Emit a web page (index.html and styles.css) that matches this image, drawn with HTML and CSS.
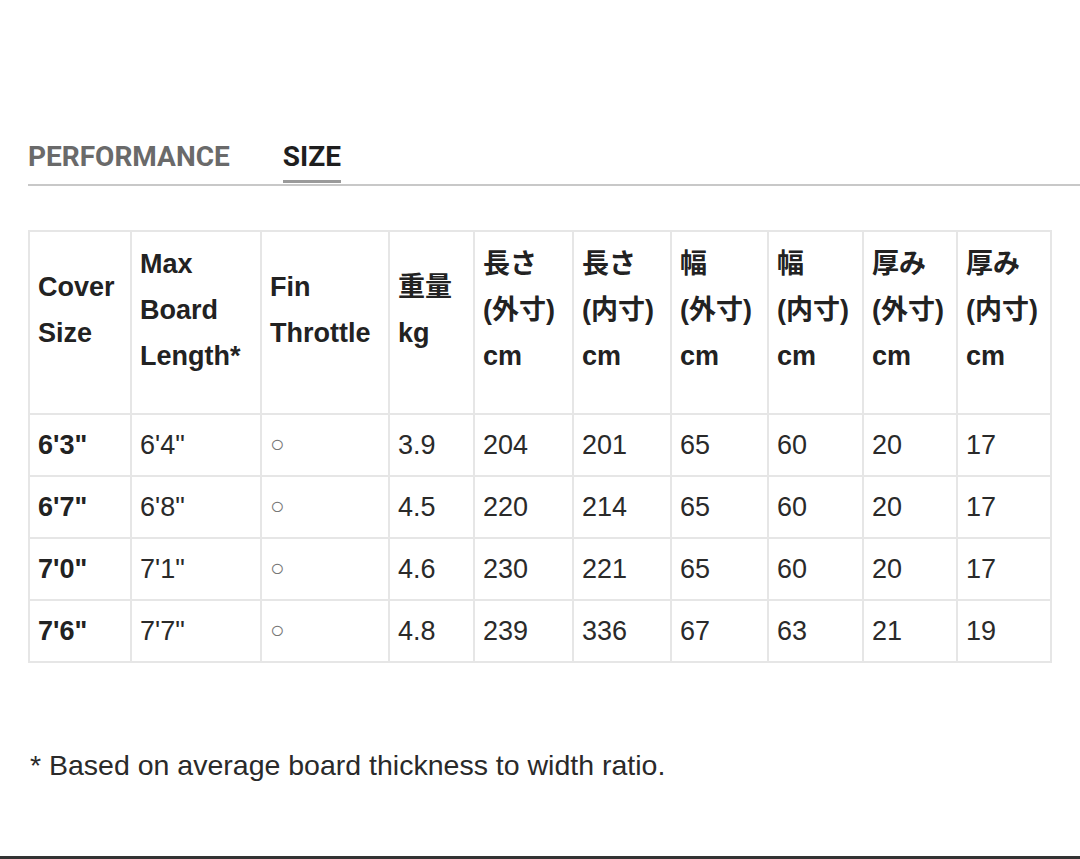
FILE: index.html
```html
<!DOCTYPE html>
<html>
<head>
<meta charset="utf-8">
<link rel="stylesheet" href="styles.css">
</head>
<body>
<div class="page">
  <div class="tabs">
    <span class="tab">PERFORMANCE</span>
    <span class="tab active">SIZE</span>
  </div>
  <table class="size-table">
    <colgroup>
      <col style="width:102px"><col style="width:130px"><col style="width:128px"><col style="width:85px"><col style="width:99px"><col style="width:98px"><col style="width:97px"><col style="width:95px"><col style="width:94px"><col style="width:94px">
    </colgroup>
    <thead>
      <tr>
        <th>Cover<br>Size</th>
        <th>Max<br>Board<br>Length*</th>
        <th>Fin<br>Throttle</th>
        <th>重量<br>kg</th>
        <th>長さ<br>(外寸)<br>cm</th>
        <th>長さ<br>(内寸)<br>cm</th>
        <th>幅<br>(外寸)<br>cm</th>
        <th>幅<br>(内寸)<br>cm</th>
        <th>厚み<br>(外寸)<br>cm</th>
        <th>厚み<br>(内寸)<br>cm</th>
      </tr>
    </thead>
    <tbody>
      <tr><td class="b">6'3"</td><td>6'4"</td><td class="o">○</td><td>3.9</td><td>204</td><td>201</td><td>65</td><td>60</td><td>20</td><td>17</td></tr>
      <tr><td class="b">6'7"</td><td>6'8"</td><td class="o">○</td><td>4.5</td><td>220</td><td>214</td><td>65</td><td>60</td><td>20</td><td>17</td></tr>
      <tr><td class="b">7'0"</td><td>7'1"</td><td class="o">○</td><td>4.6</td><td>230</td><td>221</td><td>65</td><td>60</td><td>20</td><td>17</td></tr>
      <tr><td class="b">7'6"</td><td>7'7"</td><td class="o">○</td><td>4.8</td><td>239</td><td>336</td><td>67</td><td>63</td><td>21</td><td>19</td></tr>
    </tbody>
  </table>
  <p class="note">* Based on average board thickness to width ratio.</p>
</div>
<div class="bottom-bar"></div>
</body>
</html>
```

FILE: styles.css
```css
html, body {
  margin: 0;
  padding: 0;
  background: #fff;
}
body {
  width: 1080px;
  height: 859px;
  position: relative;
  overflow: hidden;
  font-family: "Liberation Sans", Arial, "Noto Sans CJK JP", sans-serif;
  color: #222;
}
.page {
  padding: 137px 0 0 28px;
}
.tabs {
  display: flex;
  gap: 53px;
  border-bottom: 2px solid #c8c8c8;
  height: 49px;
  box-sizing: border-box;
}
.tab {
  font-family: Roboto, "Liberation Sans", sans-serif;
  font-weight: 700;
  font-size: 28px;
  line-height: 40px;
  color: #6a6a6a;
}
.tab.active {
  color: #1e1e1e;
  border-bottom: 3px solid #9a9a9a;
  height: 46px;
  box-sizing: border-box;
  margin-bottom: -2px;
}
.size-table {
  margin-top: 44px;
  border-collapse: collapse;
  table-layout: fixed;
  width: 1022px;
}
.size-table th,
.size-table td {
  border: 2px solid #e6e6e6;
  font-size: 27px;
  text-align: left;
  padding: 0 0 0 8px;
  white-space: nowrap;
}
.size-table th {
  font-weight: 700;
  line-height: 46px;
  height: 181px;
  box-sizing: border-box;
  padding-top: 9px;
  padding-bottom: 34px;
  vertical-align: middle;
}
.size-table td {
  height: 62px;
  line-height: 46px;
  vertical-align: middle;
  box-sizing: border-box;
  color: #2a2a2a;
}
.size-table td.b {
  font-weight: 700;
  color: #222;
}
.size-table td.o {
  color: #777;
  font-size: 24px;
  padding-bottom: 2px;
}
.note {
  margin: 84px 0 0 2px;
  font-size: 28.5px;
  line-height: 36px;
  color: #2a2a2a;
}
.bottom-bar {
  position: absolute;
  left: 0;
  right: 0;
  bottom: 0;
  height: 3px;
  background: #333;
}
```
